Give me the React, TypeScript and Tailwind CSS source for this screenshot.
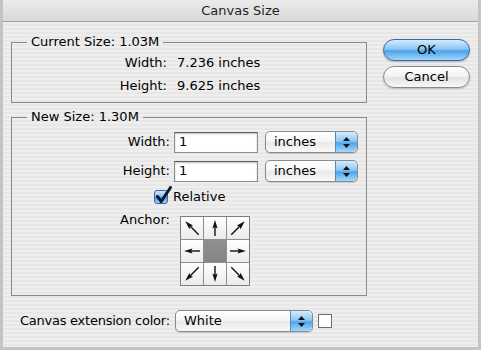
import React from "react";

const font = { fontFamily: '"DejaVu Sans", "Liberation Sans", sans-serif' };

function Arrow({ rot, len }: { rot: number; len: number }) {
  const top = 11 - len;
  const bot = 11 + len;
  return (
    <svg width="22" height="22" viewBox="0 0 22 22">
      <g transform={`rotate(${rot} 11 11)`}>
        <line x1="11" y1={bot} x2="11" y2={top + 5} stroke="#111" strokeWidth="1.4" />
        <path d={`M11 ${top} L13.6 ${top + 8.5} L11 ${top + 7} L8.4 ${top + 8.5} Z`} fill="#111" />
      </g>
    </svg>
  );
}

function Stepper() {
  return (
    <div className="w-[22px] h-full flex flex-col items-center justify-center gap-[3px] rounded-r-[5px] border-l border-[#5a87b5] bg-[linear-gradient(to_bottom,#d3ebfd_0%,#8fc8f4_45%,#4fa3ea_55%,#a3d8fb_100%)]">
      <svg width="7" height="4" viewBox="0 0 7 4"><path d="M3.5 0 L7 4 L0 4 Z" fill="#111" /></svg>
      <svg width="7" height="4" viewBox="0 0 7 4"><path d="M0 0 L7 0 L3.5 4 Z" fill="#111" /></svg>
    </div>
  );
}

function Popup({ label, w }: { label: string; w: string }) {
  return (
    <div className={`${w} h-[22px] flex items-stretch rounded-[5px] border border-[#8a8a8a] bg-[linear-gradient(to_bottom,#ffffff_0%,#f6f6f6_45%,#e9e9e9_55%,#f9f9f9_100%)] shadow-[0_1px_1px_rgba(0,0,0,0.15)]`}>
      <div className="flex-1 flex items-center pl-[8px] text-[13px] text-black">{label}</div>
      <Stepper />
    </div>
  );
}

function Input({ value }: { value: string }) {
  return (
    <div className="w-[84px] h-[21px] flex items-center bg-white border border-[#8c8c8c] border-t-[#5f5f5f] shadow-[inset_0_1px_2px_rgba(0,0,0,0.25)] pl-[4px] text-[13px] text-black">
      {value}
    </div>
  );
}

export default function App() {
  const cells: { rot: number; len: number }[] = [
    { rot: -45, len: 9.5 },
    { rot: 0, len: 8 },
    { rot: 45, len: 9.5 },
    { rot: -90, len: 8 },
    { rot: 0, len: 0 },
    { rot: 90, len: 8 },
    { rot: -135, len: 9.5 },
    { rot: 180, len: 8 },
    { rot: 135, len: 9.5 },
  ];
  return (
    <div style={font} className="w-[481px] h-[350px] flex flex-col bg-[#c4c4c4] px-[3px] pb-[3px] text-[13px] leading-[16px] text-black">
      <div className="h-[22px] shrink-0 flex items-center justify-center border-b border-[#9e9e9e] bg-[linear-gradient(to_bottom,#ebebeb,#d9d9d9)] text-[#1e1e1e]">
        Canvas Size
      </div>
      <div className="flex-1 flex flex-col bg-[repeating-linear-gradient(to_bottom,#eeeeee_0px,#eeeeee_2px,#e7e7e7_2px,#e7e7e7_4px)]">
        <div className="flex">
          <div className="ml-[8px] w-[356px] flex flex-col">
            <fieldset className="mt-[12px] border border-[#8a8a8a] pb-[8px]">
              <legend className="ml-[15px] px-[4px]">Current Size: 1.03M</legend>
              <div className="flex flex-col gap-[7px] pt-[5px]">
                <div className="flex">
                  <div className="w-[155px] text-right">Width:</div>
                  <div className="ml-[10px]">7.236 inches</div>
                </div>
                <div className="flex">
                  <div className="w-[155px] text-right">Height:</div>
                  <div className="ml-[10px]">9.625 inches</div>
                </div>
              </div>
            </fieldset>
            <fieldset className="mt-[6px] border border-[#8a8a8a] pb-[9px]">
              <legend className="ml-[15px] px-[4px]">New Size: 1.30M</legend>
              <div className="flex flex-col pt-[6px]">
                <div className="flex items-center h-[22px]">
                  <div className="w-[158px] text-right">Width:</div>
                  <div className="ml-[4px]"><Input value="1" /></div>
                  <div className="ml-[7px]"><Popup label="inches" w="w-[93px]" /></div>
                </div>
                <div className="flex items-center h-[22px] mt-[7px]">
                  <div className="w-[158px] text-right">Height:</div>
                  <div className="ml-[4px]"><Input value="1" /></div>
                  <div className="ml-[7px]"><Popup label="inches" w="w-[93px]" /></div>
                </div>
                <div className="flex items-center mt-[7px] h-[16px]">
                  <div className="ml-[142px] relative w-[14px] h-[14px] rounded-[3px] border border-[#3a6aa0] bg-[linear-gradient(to_bottom,#cfe8fc_0%,#86c2f3_45%,#4a9fe8_55%,#9dd4fa_100%)]">
                    <svg className="absolute left-[0px] top-[-5px]" width="17" height="18" viewBox="0 0 17 18">
                      <path d="M2.5 10.5 L6.2 15.5 L15.5 1.5" fill="none" stroke="#0d1830" strokeWidth="3" strokeLinejoin="round" strokeLinecap="round" />
                    </svg>
                  </div>
                  <div className="ml-[5px]">Relative</div>
                </div>
                <div className="flex items-start mt-[7px]">
                  <div className="w-[158px] text-right">Anchor:</div>
                  <div className="ml-[10px] mt-[4px] w-[70px] h-[70px] border border-[#7e7e7e] bg-[#8e8e8e] grid grid-cols-3 gap-px">
                    {cells.map((c, i) =>
                      i === 4 ? (
                        <div key={i} className="bg-[linear-gradient(to_bottom,#8f8f8f,#858585)]" />
                      ) : (
                        <div key={i} className="flex items-center justify-center bg-[linear-gradient(to_bottom,#ffffff,#ebebeb)]">
                          <Arrow rot={c.rot} len={c.len} />
                        </div>
                      )
                    )}
                  </div>
                </div>
              </div>
            </fieldset>
          </div>
          <div className="ml-[16px] w-[87px] flex flex-col">
            <div className="mt-[17px] h-[22px] rounded-full border border-[#3b6aa3] bg-[linear-gradient(to_bottom,#d2ebfd_0%,#8cc6f4_45%,#4da2ea_55%,#9fd6fb_100%)] flex items-center justify-center shadow-[0_1px_2px_rgba(0,0,0,0.25)]">
              OK
            </div>
            <div className="mt-[5px] h-[22px] rounded-full border border-[#8a8a8a] bg-[linear-gradient(to_bottom,#ffffff_0%,#f3f3f3_45%,#e3e3e3_55%,#f8f8f8_100%)] flex items-center justify-center shadow-[0_1px_2px_rgba(0,0,0,0.2)]">
              Cancel
            </div>
          </div>
        </div>
        <div className="flex items-center mt-[14px] pl-[17px]">
          <div className="w-[155px] whitespace-nowrap tracking-[-0.25px]">Canvas extension color:</div>
          <Popup label="White" w="w-[138px]" />
          <div className="ml-[5px] w-[14px] h-[14px] bg-white border border-[#6e6e6e]" />
        </div>
      </div>
    </div>
  );
}
